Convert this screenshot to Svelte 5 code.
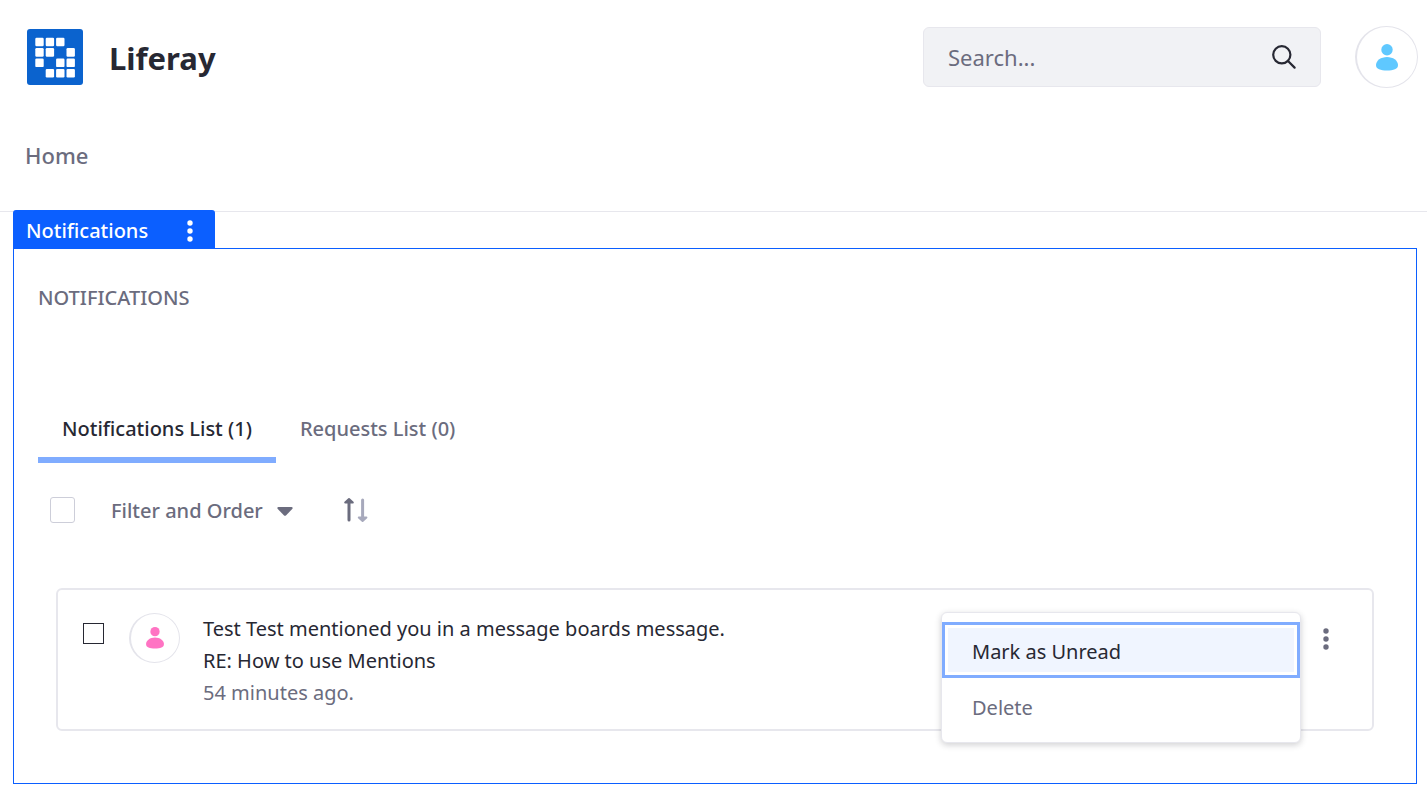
<script>
  const cells = [
    [0, 0], [1, 0], [2, 0],
    [0, 1], [1, 1], [3, 1],
    [0, 2], [2, 2], [3, 2],
    [1, 3], [2, 3], [3, 3]
  ];
  const tabs = ['Notifications List (1)', 'Requests List (0)'];
  let active = $state(0);
  let menuOpen = $state(true);
</script>

{#snippet dots()}
  <svg class="dots" viewBox="0 0 6 22" aria-hidden="true">
    <circle cx="3" cy="3" r="2.7" /><circle cx="3" cy="11" r="2.7" /><circle cx="3" cy="19" r="2.7" />
  </svg>
{/snippet}

{#snippet person()}
  <svg class="person" viewBox="0 0 22 27" aria-hidden="true">
    <circle cx="11" cy="5.7" r="5.7" />
    <path d="M11 13C17 13 22 16.6 22 21C22 25.2 17.5 26.5 11 26.5S0 25.2 0 21C0 16.6 5 13 11 13Z" />
  </svg>
{/snippet}

<header>
  <div class="top">
    <a class="brand" href="#home">
      <svg class="logo" viewBox="0 0 56 56" aria-hidden="true">
        <rect width="56" height="56" rx="3" fill="#0b63ce" />
        {#each cells as [x, y]}
          <rect x={8.3 + x * 10.4} y={8.7 + y * 10.4} width="8.4" height="8.6" rx="1.2" fill="#fff" />
        {/each}
      </svg>
      <span>Liferay</span>
    </a>
    <form class="search" role="search" onsubmit={(e) => e.preventDefault()}>
      <input type="text" placeholder="Search..." aria-label="Search" />
      <button type="submit" aria-label="Submit search">
        <svg viewBox="0 0 24 24" aria-hidden="true">
          <circle cx="9.8" cy="9.8" r="8.6" /><path d="M16 16L22.6 22.6" />
        </svg>
      </button>
    </form>
    <button class="avatar blue" aria-label="User menu">{@render person()}</button>
  </div>
  <nav><a href="#home">Home</a></nav>
</header>

<main>
  <div class="topper">
    <span>Notifications</span>
    <button aria-label="Portlet options">{@render dots()}</button>
  </div>
  <section class="portlet">
    <h2>NOTIFICATIONS</h2>
    <div class="tabs" role="tablist">
      {#each tabs as tab, i}
        <button role="tab" aria-selected={active === i} class:active={active === i} onclick={() => (active = i)}>{tab}</button>
      {/each}
    </div>
    <div class="toolbar">
      <input type="checkbox" aria-label="Select all" />
      <button class="filter">
        Filter and Order
        <svg viewBox="0 0 16 9" aria-hidden="true"><path d="M1.5 0H14.5Q16.4 .4 15.2 2L9.2 8.2Q8 9.4 6.8 8.2L.8 2Q-.4 .4 1.5 0Z" /></svg>
      </button>
      <button class="order" aria-label="Reverse order">
        <svg viewBox="0 0 26 26" stroke-linecap="round" stroke-linejoin="round" aria-hidden="true">
          <g stroke="#6b6c7e" fill="#6b6c7e"><path stroke-width="3" d="M6 23V5" /><path stroke-width="2" d="M2.2 5.6L6 2L9.8 5.6Z" /></g>
          <g stroke="#a7a9bc" fill="#a7a9bc"><path stroke-width="3" d="M19.6 3V21" /><path stroke-width="2" d="M15.8 20.4L19.6 24L23.4 20.4Z" /></g>
        </svg>
      </button>
    </div>
    <article class="card">
      <input type="checkbox" aria-label="Select notification" />
      <span class="avatar pink">{@render person()}</span>
      <div class="message">
        <a href="#message">Test Test mentioned you in a message boards message.</a>
        <a href="#message">RE: How to use Mentions</a>
        <time>54 minutes ago.</time>
      </div>
      <div class="actions">
        <button class="more" aria-label="Actions" aria-expanded={menuOpen} onclick={() => (menuOpen = !menuOpen)}>{@render dots()}</button>
        {#if menuOpen}
          <div class="menu" role="menu">
            <button class="focused" role="menuitem">Mark as Unread</button>
            <button role="menuitem">Delete</button>
          </div>
        {/if}
      </div>
    </article>
  </section>
</main>

<style>
  :global(body) {
    margin: 0;
    background: #fff;
    color: #272833;
    font: 20px/32px "Segoe UI", "Noto Sans", sans-serif;
  }
  :global(*) { box-sizing: border-box; }
  a { color: inherit; text-decoration: none; }
  button { padding: 0; border: 0; background: none; color: inherit; font: inherit; cursor: pointer; }
  input { margin: 0; font: inherit; }
  svg { display: block; flex: none; }

  header { border-bottom: 1px solid #e7e7ed; }
  .top { display: flex; align-items: center; padding: 26px 9px 0 27px; }
  .brand { display: flex; align-items: center; gap: 26px; margin-right: auto; font-size: 31px; font-weight: 700; line-height: 44px; }
  .brand span { padding-top: 2px; }
  .logo { width: 56px; height: 56px; }
  .search { display: flex; align-items: center; width: 398px; height: 60px; margin-right: 34px; padding: 0 24px; border: 1px solid #e7e7ed; border-radius: 6px; background: #f1f2f5; }
  .search input { flex: 1; min-width: 0; padding: 0; border: 0; outline: 0; background: none; color: #272833; font-size: 22px; }
  .search input::placeholder { color: #6b6c7e; opacity: 1; }
  .search svg { width: 24px; height: 24px; fill: none; stroke: #272833; stroke-width: 2.2; stroke-linecap: round; }
  .avatar { display: flex; flex: none; align-items: center; justify-content: center; border: 1px solid #e4e4eb; border-left-width: 2px; border-radius: 50%; background: #fff; }
  .blue { width: 63px; height: 62px; color: #5fc8ff; }
  .pink { width: 51px; height: 50px; color: #ff73c3; }
  .person { width: 22px; height: 27px; fill: currentColor; }
  .pink .person { width: 18px; height: 22px; }
  nav { padding: 51px 25px 40px; color: #6b6c7e; font-size: 22px; font-weight: 500; }

  main { margin: -2px 10px 25px 13px; }
  .topper { display: flex; align-items: center; justify-content: space-between; width: 202px; height: 38px; padding: 4px 22px 0 13px; border-radius: 3px 3px 0 0; background: #0b5fff; color: #fff; font-weight: 500; position: relative; }
  .dots { width: 6px; height: 22px; fill: currentColor; }
  .portlet { padding: 33px 24px 52px; border: 1px solid #0b5fff; }
  h2 { margin: 0; color: #6b6c7e; font-size: 20px; font-weight: 500; line-height: 32px; }
  .tabs { display: flex; margin-top: 83px; color: #6b6c7e; font-weight: 500; }
  .tabs button { padding: 16px 24px 12px; border-bottom: 6px solid transparent; font-weight: 500; }
  .tabs .active { border-color: #80acff; color: #272833; }
  .toolbar { display: flex; align-items: center; padding: 31px 12px 0; color: #6b6c7e; }
  input[type="checkbox"] { appearance: none; flex: none; background: #fff; }
  .toolbar input { width: 25px; height: 26px; border: 1px solid #cdced9; border-radius: 3px; }
  .filter { display: flex; align-items: center; gap: 14px; height: 32px; margin: 0 50px 0 36px; padding-top: 2px; font-weight: 500; }
  .filter svg { width: 16px; height: 9px; fill: #6b6c7e; }
  .order svg { width: 26px; height: 26px; }
  .card { display: flex; align-items: flex-start; margin: 62px 18px 0; padding: 23px 43px 20px 25px; border: 2px solid #e7e7ed; border-radius: 6px; }
  .card input { width: 21px; height: 21px; margin: 10px 25px 0 0; border: 1px solid #272833; }
  .message { display: flex; flex: 1; flex-direction: column; margin-left: 23px; }
  .message time { color: #6b6c7e; }
  .actions { position: relative; margin-top: 15px; }
  .more { display: block; color: #6b6c7e; }
  .menu { position: absolute; top: -16px; right: 28px; width: 360px; padding: 9px 0 8px; border: 1px solid #e7e7ed; border-radius: 6px; background: #fff; box-shadow: 0 2px 6px rgb(39 40 51 / 22%); color: #6b6c7e; }
  .menu button { display: block; width: 100%; height: 56px; padding: 3px 30px 0; text-align: left; }
  .menu .focused { outline: 3px solid #80acff; outline-offset: -3px; box-shadow: inset 0 0 0 6px #fff; background: #f0f5ff; color: #272833; }
</style>
